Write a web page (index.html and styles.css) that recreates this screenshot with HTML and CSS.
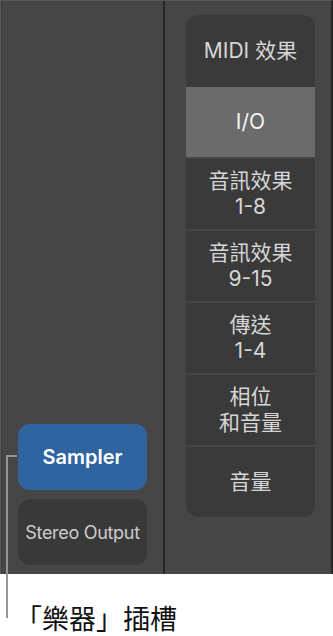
FILE: index.html
```html
<!DOCTYPE html>
<html lang="zh-Hant">
<head>
  <meta charset="UTF-8" />
  <meta name="viewport" content="width=device-width, initial-scale=1.0"/>
  <title>Mixer slots</title>
  <link rel="stylesheet" href="styles.css">
</head>
<body>

<div class="mixer">
  <div class="channel-col">
    <div class="slot slot-instrument">Sampler</div>
    <div class="slot slot-output">Stereo Output</div>
  </div>
  <div class="menu-col">
    <div class="menu-card">
      <div class="menu-row">MIDI 效果</div>
      <div class="menu-row active">I/O</div>
      <div class="menu-row">音訊效果<br>1-8</div>
      <div class="menu-row">音訊效果<br>9-15</div>
      <div class="menu-row">傳送<br>1-4</div>
      <div class="menu-row">相位<br>和音量</div>
      <div class="menu-row">音量</div>
    </div>
  </div>
</div>

<!-- callout line from the instrument slot down to the caption -->
<div class="callout-line"></div>

<div class="caption">「樂器」插槽</div>

</body>
</html>
```

FILE: styles.css
```css
:root {
  --panel-bg: #464646;
  --card-bg: #3a3a3a;
  --row-active: #6b6b6b;
  --divider: #262626;
  --text-light: #d6d6d6;
}

* {
  box-sizing: border-box;
  margin: 0;
  padding: 0;
}

html, body {
  background: #fff;
  font-family: Inter, "Noto Sans CJK TC", sans-serif;
}

body {
  position: relative;
  width: 333px;
  height: 636px;
  overflow: hidden;
}

.mixer {
  display: flex;
  height: 574px;
  background: var(--panel-bg);
  border-top: 1px solid #575757;
  border-left: 1px solid #5a5a5a;
  border-right: 2px solid var(--divider);
}

.channel-col {
  width: 164px;
  display: flex;
  flex-direction: column;
  justify-content: flex-end;
  gap: 9px;
  padding: 0 16px 9px 16px;
  border-left: 1px solid #3c3c3c;
  border-right: 2px solid var(--divider);
}

.slot {
  height: 66px;
  border-radius: 12px;
  display: flex;
  align-items: center;
  justify-content: center;
}

.slot-instrument {
  background: #2f64a0;
  color: #fff;
  font-size: 20px;
  font-weight: 600;
}

.slot-output {
  background: #393939;
  color: #cdcdcd;
  font-size: 18px;
  letter-spacing: -0.3px;
}

.menu-col {
  flex: 1;
  padding: 14px 16px 0 21px;
}

.menu-card {
  display: flex;
  flex-direction: column;
  gap: 2px;
  border-radius: 12px;
  overflow: hidden;
}

.menu-row {
  height: 70px;
  background: var(--card-bg);
  color: var(--text-light);
  font-size: 21px;
  line-height: 26px;
  text-align: center;
  display: flex;
  align-items: center;
  justify-content: center;
}

.menu-row:first-child {
  height: 72px;
  margin-bottom: -2px;
}

.menu-row.active {
  background: var(--row-active);
  color: #f4f4f4;
}

.callout-line {
  position: absolute;
  left: 6px;
  top: 455px;
  width: 11px;
  height: 163px;
  border-left: 2px solid #959595;
  border-top: 2px solid #959595;
}

.caption {
  padding: 30px 0 0 15px;
  font-family: "Noto Sans CJK TC", sans-serif;
  font-size: 27px;
  line-height: 27px;
  color: #111;
}
```
